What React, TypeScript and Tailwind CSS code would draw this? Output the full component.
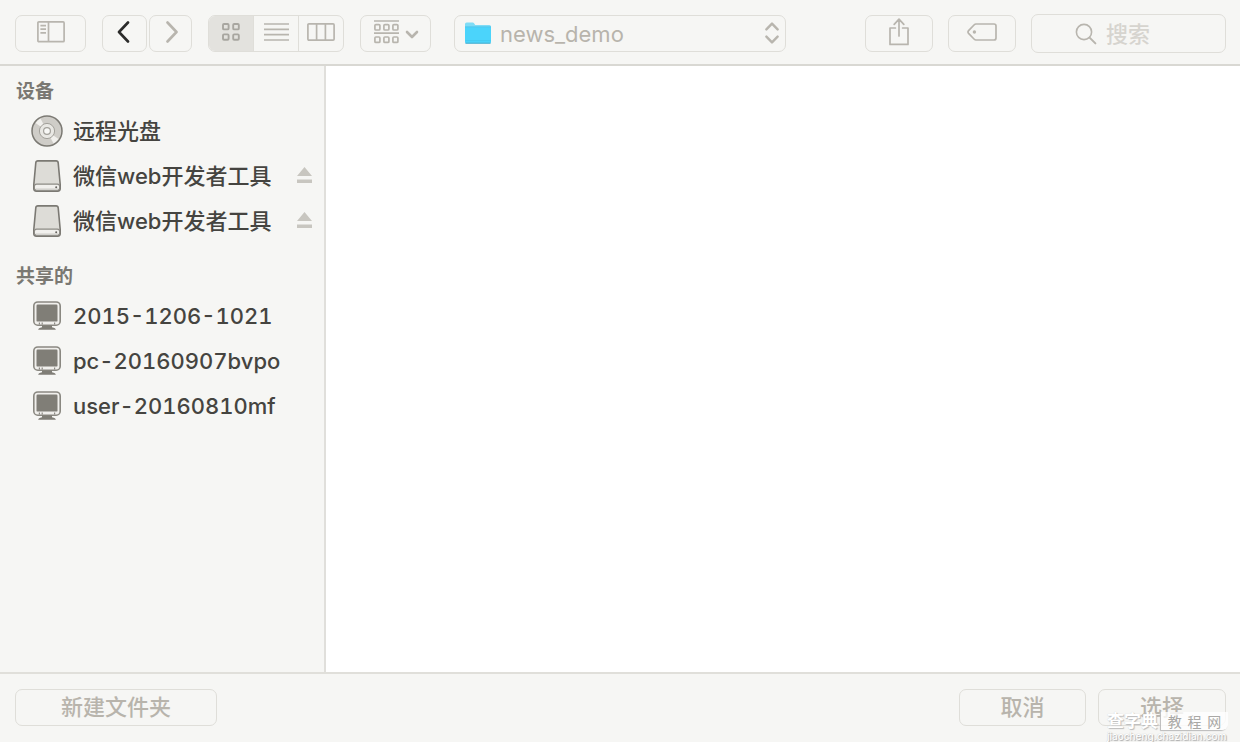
import { ReactNode } from "react";

const DEVICES = [
    { name: "远程光盘", icon: <DiscIcon />, ejectable: false },
    { name: "微信web开发者工具", icon: <DriveIcon />, ejectable: true },
    { name: "微信web开发者工具", icon: <DriveIcon />, ejectable: true },
];

const SHARED = [
    { name: "2015-1206-1021", icon: <MonitorIcon />, ejectable: false },
    { name: "pc-20160907bvpo", icon: <MonitorIcon />, ejectable: false },
    { name: "user-20160810mf", icon: <MonitorIcon />, ejectable: false },
];

type Place = { name: string; icon: ReactNode; ejectable: boolean };

function DiscIcon() {
    return (
        <svg width="32" height="32" viewBox="0 0 32 32" fill="none">
            <circle cx="16" cy="16" r="15" fill="#cfcdc8" stroke="#7b7973" strokeWidth="1.5" />
            <path d="M16 16 L4.5 8 A14 14 0 0 1 9.5 3.6 Z" fill="#f1f0ed" />
            <path d="M16 16 L27.5 24 A14 14 0 0 1 22.5 28.4 Z" fill="#f1f0ed" />
            <circle cx="16" cy="16" r="7.6" fill="#e9e8e4" stroke="#a3a19b" strokeWidth="1" />
            <circle cx="16" cy="16" r="3.4" fill="#f8f8f6" stroke="#a3a19b" strokeWidth="1.2" />
        </svg>
    );
}

function DriveIcon() {
    return (
        <svg width="32" height="32" viewBox="0 0 32 32" fill="none">
            <path
                d="M6.9 .9 H25.1 Q27 .9 27.2 2.8 L29.2 24.5 V28.5 Q29.2 31.1 26.6 31.1 H5.4 Q2.8 31.1 2.8 28.5 V24.5 L4.8 2.8 Q5 .9 6.9 .9 Z"
                fill="#dddcd7"
                stroke="#7b7973"
                strokeWidth="1.6"
            />
            <rect x="3.4" y="24.1" width="25.2" height="6.2" rx="2.2" fill="#f1f0ed" stroke="#8c8a84" strokeWidth="1.1" />
            <path d="M5 29 H27" stroke="#cfcec9" strokeWidth="1" />
            <circle cx="25.2" cy="27.2" r="1" fill="#65635e" />
        </svg>
    );
}

function MonitorIcon() {
    return (
        <svg width="32" height="32" viewBox="0 0 32 32" fill="none">
            <rect x="2.8" y="2" width="26.4" height="23.2" rx="4" fill="#f0efec" stroke="#8a8881" strokeWidth="1.6" />
            <rect x="5.5" y="4.6" width="21" height="17" rx="1.2" fill="#807e77" />
            <path d="M8.4 22.6 v2 M11.2 22.6 v2 M23.6 22.6 v2" stroke="#8a8881" strokeWidth="1.2" />
            <path d="M11 25.5 H21 V27.2 Q24.8 27.8 24.8 29.8 H7.2 Q7.2 27.8 11 27.2 Z" fill="#807e77" />
        </svg>
    );
}

const SidebarIcon = () => (
    <svg width="28" height="22" viewBox="0 0 28 22" fill="none" stroke="#b8b5ae" strokeWidth="1.7">
        <rect x=".9" y=".9" width="26.2" height="19.8" rx="1" />
        <path d="M11.5 1 V20.5 M3.4 4.6 H9 M3.4 8.2 H9 M3.4 11.8 H9" />
    </svg>
);

const Chevron = ({ d, color }: { d: string; color: string }) => (
    <svg width="16" height="22" viewBox="0 0 16 22" fill="none" stroke={color} strokeWidth="2.6" strokeLinecap="round" strokeLinejoin="round">
        <path d={d} />
    </svg>
);

const GridIcon = () => (
    <svg width="18" height="18" viewBox="0 0 18 18" fill="none" stroke="#a8a6a0" strokeWidth="1.9">
        <rect x="1" y="1" width="5.6" height="5.4" rx="1" />
        <rect x="11.2" y="1" width="5.6" height="5.4" rx="1" />
        <rect x="1" y="11.4" width="5.6" height="5.4" rx="1" />
        <rect x="11.2" y="11.4" width="5.6" height="5.4" rx="1" />
    </svg>
);

const ListIcon = () => (
    <svg width="25" height="18" viewBox="0 0 25 18" fill="none" stroke="#b8b5ae" strokeWidth="1.7">
        <path d="M0 1 H25 M0 6.3 H25 M0 11.6 H25 M0 17 H25" />
    </svg>
);

const ColumnsIcon = () => (
    <svg width="28" height="18" viewBox="0 0 28 18" fill="none" stroke="#b8b5ae" strokeWidth="1.7">
        <rect x=".9" y=".9" width="26.2" height="16.2" rx="1" />
        <path d="M9.6 1 V17 M18.4 1 V17" />
    </svg>
);

const ArrangeIcon = () => (
    <svg width="46" height="24" viewBox="0 0 46 24" fill="none" stroke="#b8b5ae" strokeWidth="1.7">
        <path d="M1 1 H26 M1 13.2 H26" />
        <rect x="1.9" y="4.6" width="5" height="5.4" rx="1" />
        <rect x="10.9" y="4.6" width="5" height="5.4" rx="1" />
        <rect x="19.9" y="4.6" width="5" height="5.4" rx="1" />
        <rect x="1.9" y="17" width="5" height="5.4" rx="1" />
        <rect x="10.9" y="17" width="5" height="5.4" rx="1" />
        <rect x="19.9" y="17" width="5" height="5.4" rx="1" />
        <path d="M34 12 L39 17 L44 12" strokeWidth="2.6" strokeLinecap="round" strokeLinejoin="round" />
    </svg>
);

const ShareIcon = () => (
    <svg width="20" height="28" viewBox="0 0 20 28" fill="none" stroke="#b8b5ae" strokeWidth="1.7" strokeLinecap="round" strokeLinejoin="round">
        <path d="M6.4 10 H1 V26.4 H19 V10 H13.6 M10 18 V1.4 M5.2 6.4 L10 1.2 L14.8 6.4" />
    </svg>
);

const TagIcon = () => (
    <svg width="30" height="18" viewBox="0 0 30 18" fill="none" stroke="#b8b5ae" strokeWidth="1.7" strokeLinejoin="round">
        <path d="M9 1 H27 Q29 1 29 3 V15 Q29 17 27 17 H9 Q8 17 7 16 L1.6 10.4 Q.4 9 1.6 7.6 L7 2 Q8 1 9 1 Z" />
        <circle cx="7.4" cy="9" r="1.7" fill="#b8b5ae" stroke="none" />
    </svg>
);

const FolderIcon = () => (
    <svg width="28" height="24" viewBox="0 0 28 24">
        <path d="M1 3 Q1 1.4 2.6 1.4 H8.6 Q9.6 1.4 10.2 2.4 L11.2 4 H25.4 Q27 4 27 5.6 V20 H1 Z" fill="#7fdcf6" />
        <path d="M1 6 H27 V21 Q27 22.4 25.6 22.4 H2.4 Q1 22.4 1 21 Z" fill="#4bd4fb" />
        <path d="M1 5.8 H27" stroke="#4cc3e8" strokeWidth=".8" />
        <path d="M1.4 22.2 H26.6" stroke="#4aaccb" strokeWidth="1" />
        <path d="M1.4 19.6 H26.6" stroke="#42c6ec" strokeWidth=".8" />
    </svg>
);

const ToolButton = ({ label, width, children }: { label: string; width: string; children: ReactNode }) => (
    <button
        type="button"
        aria-label={label}
        className={`flex h-[37px] shrink-0 items-center justify-center rounded-[7px] border border-[#dfded9] pb-[3px] ${width}`}
    >
        {children}
    </button>
);

const FooterButton = ({ width, children }: { width: string; children: ReactNode }) => (
    <button
        type="button"
        className={`h-[37px] rounded-[7px] border border-[#dfded9] text-[22px] leading-8 font-medium text-[#b8b4ac] ${width}`}
    >
        {children}
    </button>
);

const PlaceGroup = ({ title, places }: { title: string; places: Place[] }) => (
    <section>
        <h2 className="pt-1 pl-4 text-[19px] leading-8 font-bold text-[#7a7872]">{title}</h2>
        <ul>
            {places.map((place, index) => (
                <li key={index} className="flex h-[45px] items-center pr-3 pl-[31px]">
                    <button
                        type="button"
                        className="flex flex-1 items-center gap-[10px] text-left text-[22px] leading-8 font-medium whitespace-nowrap text-[#454440] tabular-nums"
                    >
                        {place.icon}
                        {place.name}
                    </button>
                    {place.ejectable && (
                        <button type="button" aria-label={`推出 ${place.name}`}>
                            <svg width="15" height="17" viewBox="0 0 15 17" fill="#c8c6c0">
                                <path d="M7.5 0 L15 9 H0 Z M0 12.5 H15 V16 H0 Z" />
                            </svg>
                        </button>
                    )}
                </li>
            ))}
        </ul>
    </section>
);

const Toolbar = () => (
    <header className="flex h-[66px] shrink-0 items-center border-b-2 border-[#d9d8d3] pt-[2px] pr-[14px] pl-[15px]">
        <ToolButton label="边栏" width="w-[71px]"><SidebarIcon /></ToolButton>

        <div className="ml-4 flex gap-[2px]">
            <ToolButton label="后退" width="w-[45px]">
                <Chevron d="M11 1.5 L2 11 L11 20.5" color="#2b2b2a" />
            </ToolButton>
            <ToolButton label="前进" width="w-[43px]">
                <Chevron d="M4.5 1.5 L13.5 11 L4.5 20.5" color="#b8b5ae" />
            </ToolButton>
        </div>

        <div className="ml-4 flex h-[37px] w-[136px] shrink-0 divide-x divide-[#dfded9] overflow-hidden rounded-[7px] border border-[#dfded9]">
            <button type="button" aria-label="图标" className="flex flex-1 items-center justify-center bg-[#e3e2de] pb-[3px]"><GridIcon /></button>
            <button type="button" aria-label="列表" className="flex flex-1 items-center justify-center pb-[3px]"><ListIcon /></button>
            <button type="button" aria-label="分栏" className="flex flex-1 items-center justify-center pb-[3px]"><ColumnsIcon /></button>
        </div>

        <div className="ml-4">
            <ToolButton label="排列" width="w-[71px]"><ArrangeIcon /></ToolButton>
        </div>

        <div className="relative ml-[23px] w-[332px]">
            <select
                aria-label="文件夹"
                className="h-[37px] w-full appearance-none rounded-[7px] border border-[#dfded9] pt-[2px] pl-[45px] text-[22px] text-[#b8b4ac]"
            >
                <option>news_demo</option>
            </select>
            <span className="pointer-events-none absolute inset-y-0 left-[10px] flex items-center"><FolderIcon /></span>
            <span className="pointer-events-none absolute inset-y-0 right-[7px] flex items-center">
                <svg width="14" height="22" viewBox="0 0 14 22" fill="none" stroke="#b8b5ae" strokeWidth="2.4" strokeLinecap="round" strokeLinejoin="round">
                    <path d="M1.4 7.4 L7 1.6 L12.6 7.4 M1.4 14.6 L7 20.4 L12.6 14.6" />
                </svg>
            </span>
        </div>

        <div className="ml-auto flex items-center gap-[15px]">
            <ToolButton label="共享" width="w-[68px]"><ShareIcon /></ToolButton>
            <ToolButton label="标记" width="w-[68px]"><TagIcon /></ToolButton>
            <div className="relative w-[195px]">
                <input
                    type="search"
                    aria-label="搜索"
                    placeholder="搜索"
                    className="h-[39px] w-full rounded-[7px] border border-[#dfded9] pt-[2px] pl-[74px] text-[22px] font-medium text-[#777570] placeholder:text-[#d6d4cf]"
                />
                <svg className="pointer-events-none absolute top-[9px] left-[44px]" width="22" height="22" viewBox="0 0 22 22" fill="none" stroke="#b8b5ae" strokeWidth="1.6" strokeLinecap="round">
                    <circle cx="9" cy="9" r="7.6" />
                    <path d="M14.6 14.6 L20.4 20.4" strokeWidth="2" />
                </svg>
            </div>
        </div>
    </header>
);

const Watermark = () => (
    <div className="pointer-events-none absolute right-3 bottom-0 w-[121px] text-white">
        <div className="flex h-[18px] items-center justify-between">
            <span className="text-[17px] leading-[18px] font-bold [text-shadow:1px_1px_1px_#bbb,0_0_1px_#ccc]">查字典</span>
            <span className="flex h-[18px] w-[67px] items-center justify-around rounded-br-md bg-white/80 px-1 text-[14px] text-[#a9a8a5] shadow-[-1px_1px_1px_#bbb]">
                <span>教</span>
                <span>程</span>
                <span>网</span>
            </span>
        </div>
        <div className="text-[10px] leading-[12px] font-medium whitespace-nowrap [text-shadow:1px_1px_1px_#aaa,0_0_1px_#bbb]">
            jiaocheng.chazidian.com
        </div>
    </div>
);

const App = () => {
    return (
        <div className="flex min-h-screen flex-col bg-[#f6f6f4] font-[Inter,'Noto_Sans_CJK_SC',sans-serif]">
            <Toolbar />

            <div className="flex flex-1">
                <nav className="flex w-[326px] shrink-0 flex-col gap-[14px] border-r-2 border-[#e0dfdb] pt-[6px]">
                    <PlaceGroup title="设备" places={DEVICES} />
                    <PlaceGroup title="共享的" places={SHARED} />
                </nav>
                <main className="flex-1 bg-white" />
            </div>

            <footer className="relative flex h-[70px] shrink-0 items-center border-t-2 border-[#e0dfda] pr-[14px] pb-[2px] pl-[15px]">
                <FooterButton width="w-[202px]">新建文件夹</FooterButton>
                <div className="ml-auto flex gap-3">
                    <FooterButton width="w-[127px]">取消</FooterButton>
                    <FooterButton width="w-[128px]">选择</FooterButton>
                </div>
                <Watermark />
            </footer>
        </div>
    );
};

export default App;
